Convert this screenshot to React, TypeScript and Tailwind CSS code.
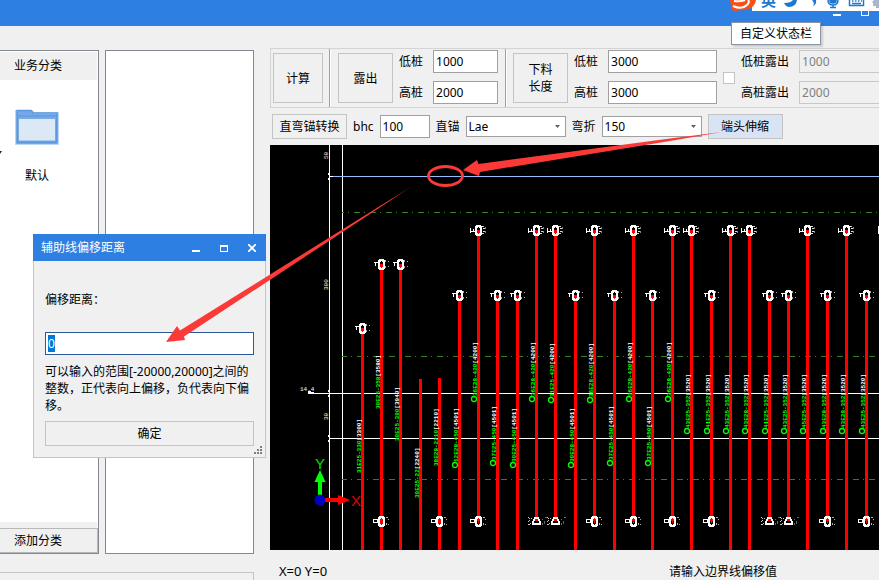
import { useEffect, useRef } from 'react';
import type { ReactNode } from 'react';

type Head = 'tall' | 'short';

interface Bar {
  x: number;
  top: number;
  // where the bar stops; the ones without an end run off the sheet
  end?: 'ring' | 'hook';
  foot?: boolean;
  head?: boolean;
  label: string;
  size: string;
  labelEnd: number;
  circle?: boolean;
}

const bars: Bar[] = [
  { x: 91, top: 183, head: true, label: '31E25-330', size: '[3300]', labelEnd: 328 },
  { x: 110, top: 119, head: true, foot: true, label: '30E25-358', size: '[3580]', labelEnd: 264 },
  { x: 129, top: 119, head: true, label: '30E25-390', size: '[3940]', labelEnd: 296 },
  { x: 149, top: 234, label: '39E25-22', size: '[2240]', labelEnd: 353 },
  { x: 168, top: 233, foot: true, label: '38E28-2210', size: '[2210]', labelEnd: 321 },
  { x: 188, top: 150, head: true, label: '12E28-450', size: '[4501]', labelEnd: 323, circle: true },
  { x: 207, top: 85, head: true, end: 'ring', label: '36E28-420', size: '[4200]', labelEnd: 257, circle: true },
  { x: 226, top: 150, head: true, label: '37E25-450', size: '[4501]', labelEnd: 321, circle: true },
  { x: 246, top: 150, head: true, label: '30E25-450', size: '[4501]', labelEnd: 323, circle: true },
  { x: 265, top: 85, head: true, end: 'hook', label: '36E28-420', size: '[4200]', labelEnd: 257, circle: true },
  { x: 284, top: 85, head: true, end: 'hook', label: '31E25-420', size: '[4200]', labelEnd: 258, circle: true },
  { x: 304, top: 150, head: true, label: '30E28-450', size: '[4501]', labelEnd: 323, circle: true },
  { x: 323, top: 85, head: true, end: 'ring', label: '36E28-420', size: '[4200]', labelEnd: 258, circle: true },
  { x: 343, top: 150, head: true, label: '37E25-450', size: '[4501]', labelEnd: 321, circle: true },
  { x: 362, top: 85, head: true, end: 'ring', label: '36E28-420', size: '[4200]', labelEnd: 257, circle: true },
  { x: 381, top: 150, head: true, label: '37E25-450', size: '[4501]', labelEnd: 321, circle: true },
  { x: 401, top: 85, head: true, end: 'ring', label: '36E28-420', size: '[4200]', labelEnd: 257, circle: true },
  { x: 420, top: 85, head: true, label: '43E25-352', size: '[3520]', labelEnd: 289, circle: true },
  { x: 440, top: 150, head: true, end: 'ring', label: '41E25-352', size: '[3520]', labelEnd: 289, circle: true },
  { x: 459, top: 85, head: true, label: '43E25-352', size: '[3520]', labelEnd: 289, circle: true },
  { x: 478, top: 85, head: true, label: '43E28-352', size: '[3520]', labelEnd: 289, circle: true },
  { x: 498, top: 150, head: true, end: 'hook', label: '41E25-352', size: '[3520]', labelEnd: 289, circle: true },
  { x: 517, top: 150, head: true, end: 'hook', label: '43E25-352', size: '[3520]', labelEnd: 289, circle: true },
  { x: 536, top: 85, head: true, label: '45E25-352', size: '[3520]', labelEnd: 289, circle: true },
  { x: 556, top: 150, head: true, end: 'ring', label: '43E28-352', size: '[3520]', labelEnd: 289, circle: true },
  { x: 575, top: 85, head: true, label: '43E28-352', size: '[3520]', labelEnd: 289, circle: true },
  { x: 595, top: 150, head: true, end: 'ring', label: '43E25-352', size: '[3520]', labelEnd: 289, circle: true },
];

function HeadMark({ x, y, kind }: { x: number; y: number; kind: Head }) {
  return (
    <g transform={`translate(${x} ${y})`} fill="none" stroke="#fff" shapeRendering="crispEdges">
      <path d="M0 -4h3v1h1v7h-1v1h-3v-1h-1v-7h1z" strokeWidth="1.6" />
      {kind === 'tall' ? (
        <>
          <path d="M-6.5 -2v5M-6 1.5h4M-3.5 -1v3" />
          <path d="M5 -3.5h2M6 -1.5h2M6 1.5h2M5 3.5h2" stroke="#ddd" />
          <path d="M8.5 -3v2M8.5 1v2" stroke="#888" />
        </>
      ) : (
        <>
          <path d="M-6 -1.5h5M-4.5 -1v3" />
          <path d="M5.5 -4v2M5.5 2v2M8.5 -3v1M8.5 2v1" stroke="#aaa" />
        </>
      )}
    </g>
  );
}

function EndMark({ x, kind }: { x: number; kind: 'ring' | 'hook' }) {
  if (kind === 'hook') {
    return (
      <g transform={`translate(${x} 376)`} fill="none" stroke="#fff" shapeRendering="crispEdges">
        <path d="M-2 3h7v-2l-2 -4h-3l-2 4z" strokeWidth="2" />
        <path d="M-7 -4l2 2M-7 1l2 -2M-6 4l2 -2M-4 -3l1 1M-7 3v1" stroke="#ccc" />
        <path d="M7.5 -2v1M7.5 2v2M9.5 -4h2M9.5 0v3" stroke="#666" />
      </g>
    );
  }
  return (
    <g transform={`translate(${x} 376)`} fill="none" stroke="#fff" shapeRendering="crispEdges">
      <path d="M-6.5 -1.5h4v3h-4z" />
      <path d="M0 -4h3v1h1v7h-1v1h-3v-1h-1v-7h1z" strokeWidth="2" />
      <path d="M1.5 -3v5" stroke="#f00" />
      <path d="M6 -3.5h2M6.5 2v2M8.5 -2v1M8 3.5h1" stroke="#aaa" />
    </g>
  );
}

function BarLabel({ bar }: { bar: Bar }) {
  return (
    <g>
      {bar.circle && <circle cx={bar.x - 3} cy={bar.labelEnd - 3} r="2.5" fill="none" stroke="#0f0" strokeWidth="1.3" />}
      <text
        transform={`translate(${bar.x} ${bar.labelEnd - (bar.circle ? 6 : 0)}) rotate(-90)`}
        className="fill-[#00ff00] font-['Liberation_Mono',monospace] text-[6px] font-bold"
      >
        {bar.label}
        <tspan className="fill-white">{bar.size}</tspan>
      </text>
    </g>
  );
}

function Drawing() {
  return (
    <svg width="1200" height="405" className="block max-w-none" aria-label="CAD">
      <g shapeRendering="crispEdges">
        <rect x="59" width="1" height="405" fill="#fff" />
        <rect x="72" width="1" height="405" fill="#fff" />
        <rect x="38" y="248" width="1162" height="1" fill="#fff" />
        <rect x="59" y="293" width="1141" height="1" fill="#fff" />
        <rect x="59" y="31" width="4" height="1" fill="#fff" />
        <rect x="63" y="31" width="1137" height="1" fill="#96bdff" />
        <g stroke="#36801f" strokeDasharray="6 4 1 5">
          <path d="M72 67.5H1200" strokeDashoffset="4" />
          <path d="M72 211.5H1200" strokeDashoffset="1" />
          <path d="M72 334.5H1200" strokeDashoffset="1" />
        </g>
        <path
          d="M58.5 28v2M58.5 33v2M58.5 245v2M58.5 250v2M58.5 290v2M58.5 295v2M38 247.5h6M38 246v3M38 246.5h3"
          stroke="#fff"
        />
        {bars.map((bar) => (
          <rect
            key={bar.x}
            x={bar.x}
            y={bar.top}
            width="3"
            height={(bar.end ? 376 : 405) - bar.top}
            fill="#f00"
          />
        ))}
      </g>

      {bars.map((bar) => (
        <BarLabel key={bar.x} bar={bar} />
      ))}
      {bars.filter((bar) => bar.head).map((bar) => (
        <HeadMark key={bar.x} x={bar.x} y={bar.top} kind={bar.top === 85 ? 'tall' : 'short'} />
      ))}
      {bars.map((bar) =>
        bar.end || bar.foot ? <EndMark key={bar.x} x={bar.x} kind={bar.end ?? 'ring'} /> : null
      )}
      <path d="M608 81h1v8h-1z" fill="#fff" />

      <g className="fill-white font-['Liberation_Mono',monospace] text-[6px]">
        <text transform="translate(58 14) rotate(-90)">50</text>
        <text transform="translate(58 145) rotate(-90)">300</text>
        <text transform="translate(58 275) rotate(-90)">30</text>
        <text x="30" y="246">14.4</text>
      </g>

      <path d="M48 337h4v13h-4z" fill="#0f0" />
      <path d="M50 325l5.5 12h-11z" fill="#0f0" />
      <path d="M55 353h13v4h-13z" fill="#f00" />
      <path d="M68 350l12 5l-12 5z" fill="#f00" />
      <circle cx="50" cy="355" r="5.5" fill="#0000c0" />
      <text x="45" y="324" className="fill-[#00e000] font-['Liberation_Sans',sans-serif] text-[15px]">Y</text>
      <text x="81" y="361" className="fill-[#e00000] font-['Liberation_Sans',sans-serif] text-[15px]">X</text>
    </svg>
  );
}

function Btn({ className = '', children }: { className?: string; children: ReactNode }) {
  return (
    <button type="button" className={`shrink-0 border border-[#c4c4c4] text-center ${className}`}>
      {children}
    </button>
  );
}

function Field({ id, label, value, width, disabled }: {
  id: string;
  label: string;
  value: string;
  width: string;
  disabled?: boolean;
}) {
  return (
    <div className="flex h-[23px] items-center gap-[10px]">
      <label htmlFor={id} className="shrink-0">{label}</label>
      <input
        id={id}
        defaultValue={value}
        disabled={disabled}
        className={`h-full border px-[2px] ${width} ${
          disabled ? 'border-[#c8c8c8] bg-[#f0f0f0] text-[#808080]' : 'border-[#a0a0a0] bg-white'
        }`}
      />
    </div>
  );
}

function Combo({ id, label, value }: { id: string; label: string; value: string }) {
  return (
    <div className="flex items-center gap-[6px]">
      <label htmlFor={id} className="shrink-0">{label}</label>
      <div className="relative">
        <select id={id} className="block h-[21px] w-[100px] appearance-none border border-[#a0a0a0] bg-white px-[2px]">
          <option>{value}</option>
        </select>
        <svg className="pointer-events-none absolute top-[9px] right-[6px]" width="5" height="3" viewBox="0 0 5 3">
          <path d="M0 0h5L2.5 3z" fill="#606060" />
        </svg>
      </div>
    </div>
  );
}

function Folder() {
  return (
    <svg width="46" height="38" viewBox="0 0 46 38">
      <path d="M2 3h16l2 2h24v31H2z" fill="#5b9ae0" stroke="#bcd6f3" strokeWidth="2" />
      <path d="M3.5 3h13l2 3H42.5v4h-39z" fill="#74a9ea" />
      <path d="M3 8h40" stroke="#5c97da" />
      <path d="M3 2.5h14l2 2.5h24v30H3z" fill="none" stroke="#5c99dd" strokeWidth="1.5" />
      <path d="M4.5 10.5h37v22.5h-37z" fill="#dbe8f6" stroke="#7caae0" />
    </svg>
  );
}

function Tray() {
  return (
    <div className="absolute top-0 right-0 flex h-[11px] w-[149px] overflow-hidden">
      <svg className="block" width="149" height="11" viewBox="0 0 149 11">
        <path d="M22 0h127v11H22z" fill="#fff" />
        <path d="M0 0l1.5 8q.5 3 4 3L18 9q7-2 8-9z" fill="#fa4f14" />
        <path d="M3 6q9 4 14-1q3-3 1-5M4 1q6 1 11-1" fill="none" stroke="#fff" strokeWidth="2" />
        <g fill="#1f78cf" stroke="none">
          <path d="M54 3q7 0 9-3h4q-1 7-8 7q-3 0-5-4z" />
          <path d="M82 0h4q1 4-3 6q2-3-1-6z" />
        </g>
        <g fill="none" stroke="#1f78cf" strokeWidth="1.5">
          <path d="M100 0v1q0 2 3 2t3-2V0" fill="#1f78cf" />
          <path d="M98 0q0 5 5 5t5-5M103 5v3M100 7.5h6" />
          <path d="M119.5 0v5.5h14V0M122 3.5h9M122 1h1.5M125 1h1.5M128 1h1.5M131 1h1" />
        </g>
        <path d="M142 2l2-2h5v8h-3v-2l-3 0v-3z" fill="#a9b6ce" />
        <text x="31" y="6" className="fill-[#1f78cf] font-['Noto_Sans_CJK_SC',sans-serif] text-[15px] font-bold">英</text>
      </svg>
    </div>
  );
}

function OffsetDialog() {
  const input = useRef<HTMLInputElement>(null);

  useEffect(() => {
    input.current?.focus();
    input.current?.select();
  }, []);

  return (
    <div
      role="dialog"
      aria-labelledby="dialog-title"
      className="absolute top-[234px] left-[33px] w-[233px] bg-[#f0f0f0]"
    >
      <div className="flex h-[27px] items-center bg-[#2d80e2] pl-2 text-white">
        <h2 id="dialog-title" className="flex-1">辅助线偏移距离</h2>
        <div className="flex">
          <button type="button" aria-label="最小化" className="grid h-[27px] w-7 place-items-center">
            <svg width="8" height="8"><path d="M0 6h8v2H0z" fill="#fff" /></svg>
          </button>
          <button type="button" aria-label="最大化" className="grid h-[27px] w-7 place-items-center">
            <svg width="8" height="8"><path d="M0 1h8v7H0zM1 3v4h6V3z" fill="#fff" fillRule="evenodd" /></svg>
          </button>
          <button type="button" aria-label="关闭" className="grid h-[27px] w-7 place-items-center">
            <svg width="8" height="8"><path d="M0 0l8 8M8 0L0 8" stroke="#fff" strokeWidth="1.8" /></svg>
          </button>
        </div>
      </div>
      <div className="relative border border-t-0 border-[#bcc6d8] px-[11px] pt-[30px] pb-[11px]">
        <label htmlFor="offset" className="block">偏移距离：</label>
        <input
          id="offset"
          ref={input}
          defaultValue="0"
          className="mt-6 block h-[23px] w-full border border-[#2b5797] bg-white px-[2px] outline-none selection:bg-[#0078d7] selection:text-white"
        />
        <p className="mt-2">可以输入的范围[-20000,20000]之间的整数，正代表向上偏移，负代表向下偏移。</p>
        <Btn className="mt-[7px] h-[25px] w-full">确定</Btn>
        <svg className="absolute right-[3px] bottom-[3px]" width="8" height="8">
          <path d="M6 0h2v2H6zM3 3h2v2H3zM6 3h2v2H6zM0 6h2v2H0zM3 6h2v2H3zM6 6h2v2H6z" fill="#7a7f88" />
        </svg>
      </div>
    </div>
  );
}

// hand-drawn hints that lead from the button to the line and to the dialog
function Hints() {
  return (
    <svg className="pointer-events-none absolute top-0 left-0" width="879" height="580" fill="#fb3a38">
      <defs>
        <linearGradient id="fade" gradientUnits="userSpaceOnUse" x1="417" y1="183" x2="390" y2="200">
          <stop offset="0" stopColor="#fb3a38" stopOpacity="0.2" />
          <stop offset="1" stopColor="#fb3a38" />
        </linearGradient>
      </defs>
      <ellipse cx="445.5" cy="176" rx="17" ry="9.5" fill="none" stroke="#fb3a38" strokeWidth="2.8" />
      <path d="M463 170L477 160L478.5 164L670 138.5L722 132L670 141L480 172L479 176z" />
      <path d="M166 342L177 326L180 330.5L417 183L184 336.5L185 340z" fill="url(#fade)" />
    </svg>
  );
}

export default function App() {
  return (
    <div className="relative flex h-screen min-h-[480px] flex-col overflow-hidden bg-[#f0f0f0] font-['Noto_Sans','Noto_Sans_CJK_SC',sans-serif] text-[12px] leading-[17px] text-black">
      <header className="flex h-[26px] shrink-0 justify-end bg-[#2d80e2] pt-2 pr-[10px]">
        <button type="button" aria-label="最小化" className="h-2 w-7">
          <svg width="8" height="8"><path d="M0 6h8v2H0z" fill="#fff" /></svg>
        </button>
        <button type="button" aria-label="最大化" className="h-2 w-2">
          <svg width="8" height="8"><path d="M0 0h8v8H0zM1 2v5h6V2z" fill="#fff" fillRule="evenodd" /></svg>
        </button>
      </header>

      <div className="flex min-h-0 flex-1 gap-4">
        <aside className="flex w-[254px] shrink-0 flex-col pt-6">
          <div className="flex min-h-0 flex-1 gap-[6px]">
            <section className="relative flex w-[99px] flex-col border border-l-0 border-[#828790] bg-white">
              <h2 className="mt-px mr-px bg-[#f0f0f0] py-[5px] pl-[14px] leading-[18px]">业务分类</h2>
              <div className="mt-7 flex w-[74px] flex-1 flex-col items-center">
                <Folder />
                <span className="mt-[21px]">默认</span>
              </div>
              <svg className="absolute top-[100px] left-0" width="2" height="4"><path d="M0 0h2L0 3z" fill="#223" /></svg>
              <div className="mr-px h-[6px] bg-[#f0f0f0]" />
              <button type="button" className="h-[25px] border border-l-0 border-[#b8b8b8] bg-[#f0f0f0] pl-[14px] text-left">
                添加分类
              </button>
            </section>
            <section className="flex-1 border border-[#828790] bg-white" />
          </div>
          <div className="mt-[18px] h-2 border border-b-0 border-l-0 border-[#c4c4c4]" />
        </aside>

        <main className="flex min-w-0 flex-1 flex-col overflow-hidden pt-[22px]">
          <div className="flex h-[60px] w-max min-w-full shrink-0 border-y border-l border-[#d4d4d4]">
            <div className="flex w-[58px] items-center pl-[2px]">
              <Btn className="h-[50px] w-[50px]">计算</Btn>
            </div>
            <div className="flex items-center gap-[6px] border-l border-[#a0a0a0] pr-[7px] pl-2 shadow-[inset_1px_0_0_#fff]">
              <Btn className="h-[50px] w-[55px]">露出</Btn>
              <div className="grid gap-2 pb-[2px]">
                <Field id="out-low" label="低桩" value="1000" width="w-[65px]" />
                <Field id="out-high" label="高桩" value="2000" width="w-[65px]" />
              </div>
            </div>
            <div className="flex items-center gap-[6px] border-l border-[#a0a0a0] pl-[7px] shadow-[inset_1px_0_0_#fff]">
              <Btn className="h-[50px] w-[55px] px-3">下料长度</Btn>
              <div className="grid gap-2 pb-[2px]">
                <Field id="len-low" label="低桩" value="3000" width="w-[109px]" />
                <Field id="len-high" label="高桩" value="3000" width="w-[109px]" />
              </div>
              <input
                type="checkbox"
                aria-label="桩露出"
                className="size-3 shrink-0 appearance-none border border-[#c4c4c4] bg-white"
              />
              <div className="grid gap-2 pb-[2px]">
                <Field id="pile-low" label="低桩露出" value="1000" width="w-[109px]" disabled />
                <Field id="pile-high" label="高桩露出" value="2000" width="w-[109px]" disabled />
              </div>
            </div>
          </div>

          <div className="flex h-[37px] w-max shrink-0 items-center gap-[6px] pl-[2px]">
            <Btn className="h-[25px] w-[75px]">直弯锚转换</Btn>
            <label htmlFor="bhc">bhc</label>
            <input id="bhc" defaultValue="100" className="h-[23px] w-[50px] border border-[#a0a0a0] bg-white px-[2px]" />
            <Combo id="anchor" label="直锚" value="Lae" />
            <Combo id="bend" label="弯折" value="150" />
            <Btn className="h-[25px] w-[75px] bg-[#d8e3f3]">端头伸缩</Btn>
          </div>

          <div className="min-h-0 flex-1 overflow-hidden bg-black">
            <Drawing />
          </div>

          <footer className="flex h-[30px] shrink-0 items-end pl-[9px]">
            <span className="w-[390px] text-[13px]">X=0 Y=0</span>
            <span>请输入边界线偏移值</span>
          </footer>
        </main>
      </div>

      <Tray />
      <div
        role="tooltip"
        className="absolute top-[22px] right-[58px] border border-[#8794a5] bg-white px-2 py-[2px] shadow-[2px_2px_2px_rgba(0,0,0,0.15)]"
      >
        自定义状态栏
      </div>
      <OffsetDialog />
      <Hints />
    </div>
  );
}
